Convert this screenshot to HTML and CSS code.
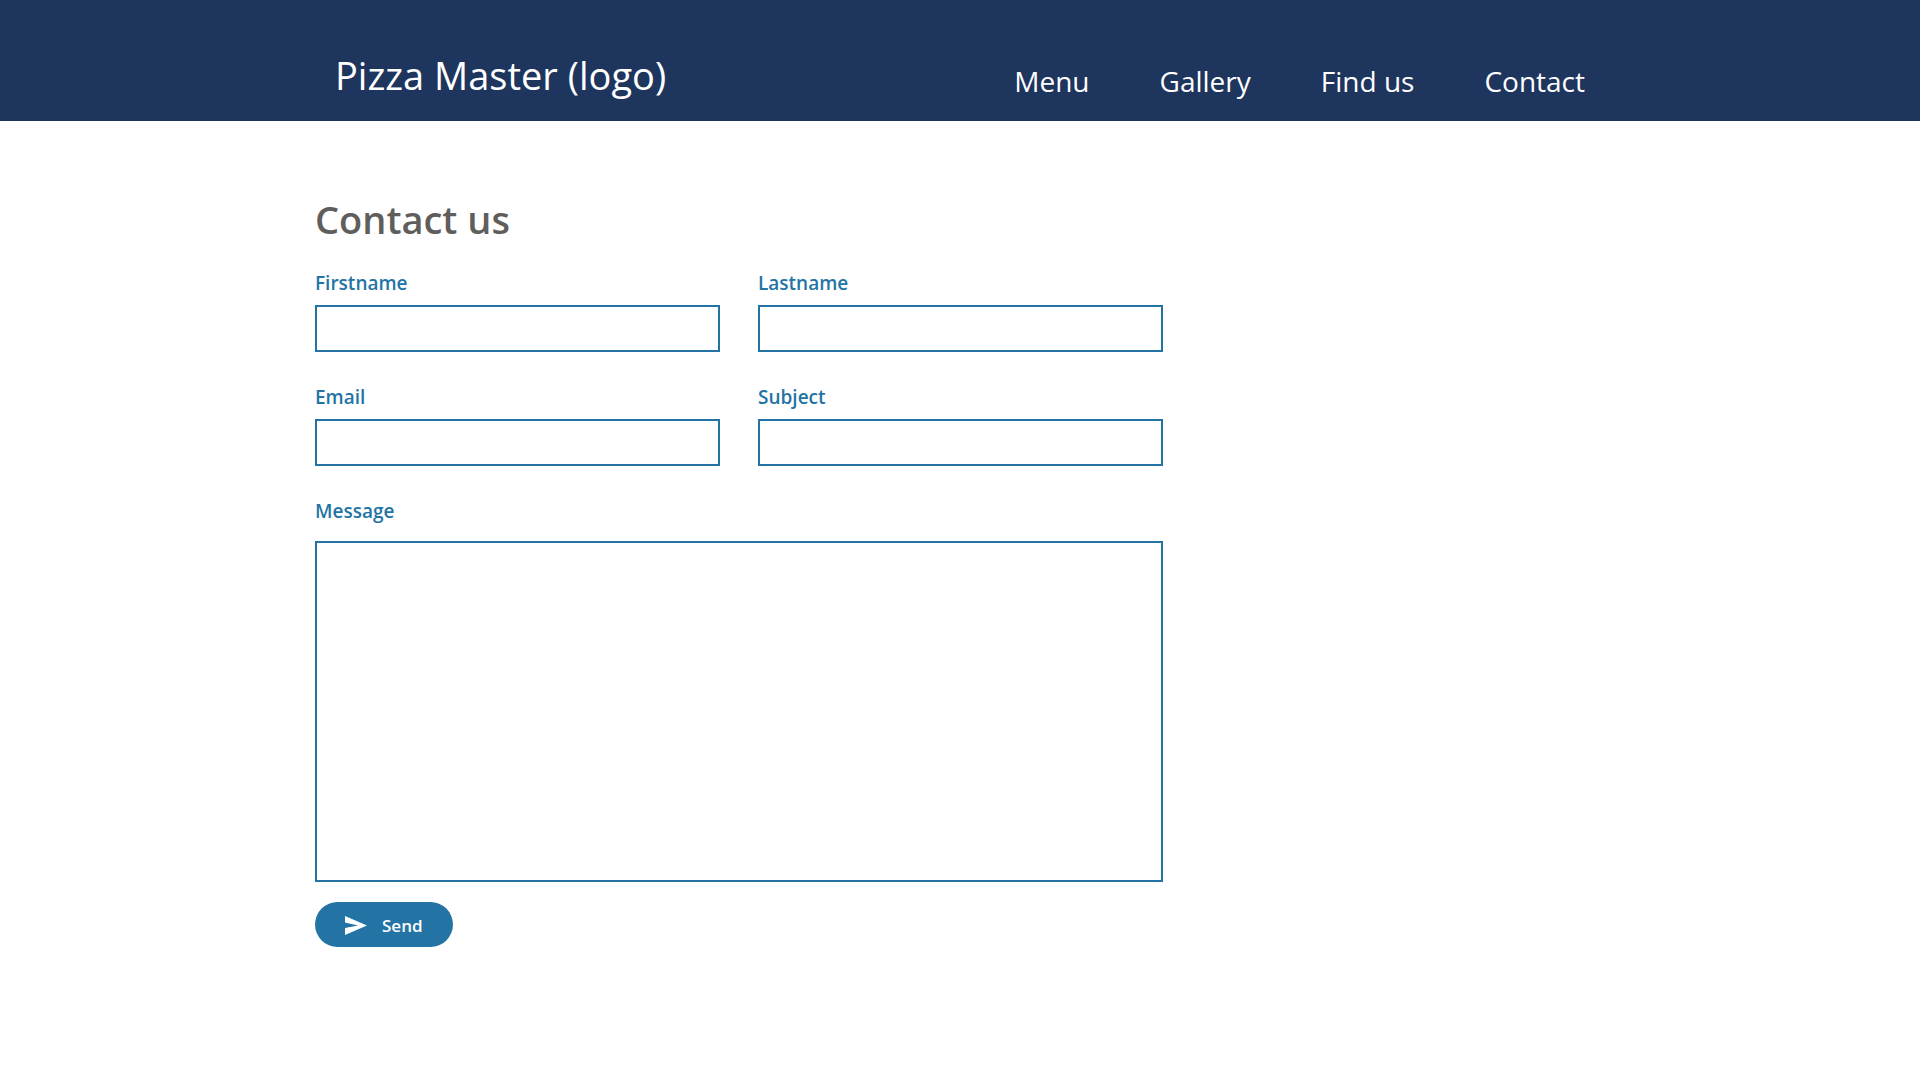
FILE: index.html
```html
<!DOCTYPE html>
<html lang="en">
<head>
<meta charset="utf-8">
<meta name="viewport" content="width=device-width, initial-scale=1">
<title>Pizza Master - Contact us</title>
<link rel="stylesheet" href="styles.css">
</head>
<body>
<header class="site-header">
  <div class="container header-inner">
    <a class="logo" href="#">Pizza Master (logo)</a>
    <nav class="main-nav">
      <a class="nav-link" href="#">Menu</a>
      <a class="nav-link" href="#">Gallery</a>
      <a class="nav-link" href="#">Find us</a>
      <a class="nav-link" href="#">Contact</a>
    </nav>
  </div>
</header>
<main class="container content">
  <h1 class="page-title">Contact us</h1>
  <form class="contact-form">
    <div class="field">
      <label class="label" for="firstname">Firstname</label>
      <input class="control" id="firstname" type="text">
    </div>
    <div class="field">
      <label class="label" for="lastname">Lastname</label>
      <input class="control" id="lastname" type="text">
    </div>
    <div class="field">
      <label class="label" for="email">Email</label>
      <input class="control" id="email" type="email">
    </div>
    <div class="field">
      <label class="label" for="subject">Subject</label>
      <input class="control" id="subject" type="text">
    </div>
    <div class="field field-message">
      <label class="label" for="message">Message</label>
      <textarea class="control control-message" id="message"></textarea>
    </div>
    <button class="send" type="button">
      <svg class="send-icon" viewBox="0 0 22 19" aria-hidden="true"><path d="M0 0L22 9.5L0 19V12L13 9.5L0 6.5Z"/></svg>
      Send
    </button>
  </form>
</main>
</body>
</html>
```
FILE: styles.css
```css
* {
  box-sizing: border-box;
}

body {
  margin: 0;
  background: #fff;
  font-family: "Open Sans", "Noto Sans", sans-serif;
}

.container {
  max-width: 1290px;
  margin: 0 auto;
}

.site-header {
  background: #1e355e;
  color: #fff;
}

.header-inner {
  display: flex;
  flex-wrap: wrap;
  align-items: flex-end;
  justify-content: space-between;
  padding: 47px 20px 18px;
}

.logo {
  color: inherit;
  font-size: 38px;
  line-height: 56px;
  text-decoration: none;
}

.main-nav {
  display: flex;
  flex-wrap: wrap;
  gap: 70px;
}

.nav-link {
  color: inherit;
  font-size: 28px;
  line-height: 44px;
  text-decoration: none;
}

.content {
  padding: 70px 0;
}

.page-title {
  margin: 0 0 22px;
  color: #605e5c;
  font-size: 38px;
  font-weight: 600;
  line-height: 56px;
}

.contact-form {
  display: grid;
  grid-template-columns: 1fr 1fr;
  gap: 31px 38px;
  max-width: 848px;
}

.field {
  display: flex;
  flex-direction: column;
  gap: 8px;
}

.field-message {
  grid-column: 1 / -1;
  gap: 16px;
}

.label {
  color: #2374a5;
  font-size: 19px;
  font-weight: 600;
  line-height: 28px;
}

.control {
  width: 100%;
  height: 47px;
  padding: 8px 12px;
  border: 2px solid #2374a5;
  border-radius: 0;
  background: #fff;
  font: inherit;
  font-size: 19px;
}

.control-message {
  height: 341px;
  resize: none;
}

.send {
  display: flex;
  align-items: center;
  justify-self: start;
  gap: 15px;
  height: 45px;
  margin-top: -11px;
  padding: 2px 30px 0;
  border: 0;
  border-radius: 23px;
  background: #2374a5;
  color: #fff;
  font: inherit;
  font-size: 17px;
  font-weight: 600;
}

.send-icon {
  width: 22px;
  height: 19px;
  fill: currentColor;
}
```
